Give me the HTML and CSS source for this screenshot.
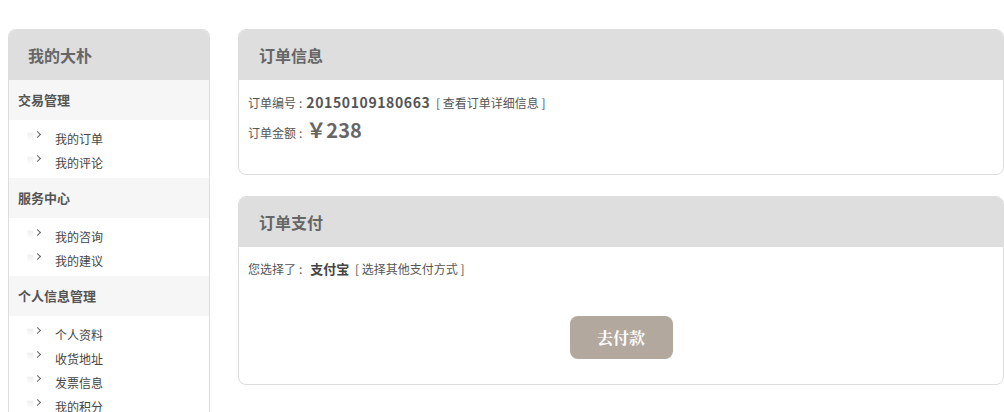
FILE: index.html
```html
<!DOCTYPE html>
<html lang="zh-CN">
<head>
  <meta charset="UTF-8" />
  <title>订单支付</title>
  <link rel="stylesheet" href="styles.css">
</head>
<body>
  <div class="page">
    <aside class="sidebar">
      <h2 class="side-title">我的大朴</h2>

      <h3 class="side-group">交易管理</h3>
      <ul class="side-list">
        <li><span class="arrow"></span>我的订单</li>
        <li><span class="arrow"></span>我的评论</li>
      </ul>

      <h3 class="side-group">服务中心</h3>
      <ul class="side-list">
        <li><span class="arrow"></span>我的咨询</li>
        <li><span class="arrow"></span>我的建议</li>
      </ul>

      <h3 class="side-group">个人信息管理</h3>
      <ul class="side-list">
        <li><span class="arrow"></span>个人资料</li>
        <li><span class="arrow"></span>收货地址</li>
        <li><span class="arrow"></span>发票信息</li>
        <li><span class="arrow"></span>我的积分</li>
      </ul>
    </aside>

    <main class="main">
      <section class="panel">
        <h2 class="panel-title">订单信息</h2>
        <div class="panel-body info">
          <p class="row">订单编号<span class="colon">:</span><b class="order-no">20150109180663</b> <a href="#">[ 查看订单详细信息 ]</a></p>
          <p class="row">订单金额<span class="colon">:</span><b class="amount">￥238</b></p>
        </div>
      </section>

      <section class="panel">
        <h2 class="panel-title">订单支付</h2>
        <div class="panel-body pay">
          <p class="row">您选择了<span class="colon">:</span><b class="method">支付宝</b> <a href="#">[ 选择其他支付方式 ]</a></p>
          <div class="actions">
            <button type="button">去付款</button>
          </div>
        </div>
      </section>
    </main>
  </div>
</body>
</html>
```

FILE: styles.css
```css
body {
  margin: 0;
  background: #fff;
  font-family: "Noto Sans CJK SC", "Liberation Sans", sans-serif;
  color: #555;
  font-size: 12px;
}
.page {
  display: flex;
  align-items: flex-start;
  gap: 28px;
  padding: 29px 0 0 8px;
}
.sidebar {
  width: 200px;
  border: 1px solid #ddd;
  border-bottom: none;
  border-radius: 8px 8px 0 0;
  overflow: hidden;
  flex-shrink: 0;
}
.side-title {
  margin: 0;
  height: 50px;
  line-height: 50px;
  padding-left: 19px;
  background: #dedede;
  font-size: 16px;
  font-weight: bold;
  color: #666;
}
.side-group {
  margin: 0;
  height: 40px;
  line-height: 40px;
  padding-left: 9px;
  background: #f6f6f6;
  font-size: 13px;
  font-weight: bold;
  color: #555;
}
.side-list {
  list-style: none;
  margin: 0;
  padding: 7px 0 3px;
}
.side-list li {
  position: relative;
  height: 24px;
  line-height: 24px;
  padding-left: 46px;
  font-size: 12px;
  color: #444;
}
.arrow {
  position: absolute;
  left: 26px;
  top: 5px;
  width: 4px;
  height: 4px;
  border-top: 1px solid #666;
  border-right: 1px solid #666;
  transform: rotate(45deg);
}
.arrow::after {
  content: '';
  position: absolute;
  left: -4px;
  top: 4px;
  width: 6px;
  height: 8px;
  background: linear-gradient(#eee, #fff);
  transform: rotate(-45deg);
}
.main {
  width: 766px;
  flex-shrink: 0;
  display: flex;
  flex-direction: column;
  gap: 21px;
}
.panel {
  border: 1px solid #ddd;
  border-radius: 8px;
  overflow: hidden;
}
.panel-title {
  margin: 0;
  height: 50px;
  line-height: 50px;
  padding-left: 20px;
  background: #dedede;
  font-size: 16px;
  font-weight: bold;
  color: #666;
}
.panel-body {
  padding: 8px 9px 0;
}
.panel-body.info {
  height: 86px;
}
.row {
  margin: 0;
  height: 28px;
  line-height: 28px;
  color: #555;
}
.colon {
  margin: 0 4px 0 3px;
}
.row a {
  color: #555;
  text-decoration: none;
  margin-left: 3px;
}
.order-no {
  font-size: 14px;
  letter-spacing: 0.6px;
  color: #555;
}
.amount {
  font-size: 20px;
  color: #666;
}
.method {
  font-size: 13px;
  color: #444;
  margin-left: 4px;
}
.pay {
  height: 129px;
}
.actions {
  display: flex;
  justify-content: center;
  padding-top: 33px;
}
button {
  width: 103px;
  height: 43px;
  background: #b3a89e;
  color: #fff;
  border: none;
  border-radius: 8px;
  font-family: "Noto Serif CJK SC", "Noto Sans CJK SC", serif;
  font-size: 16px;
  font-weight: bold;
  cursor: pointer;
}
```
